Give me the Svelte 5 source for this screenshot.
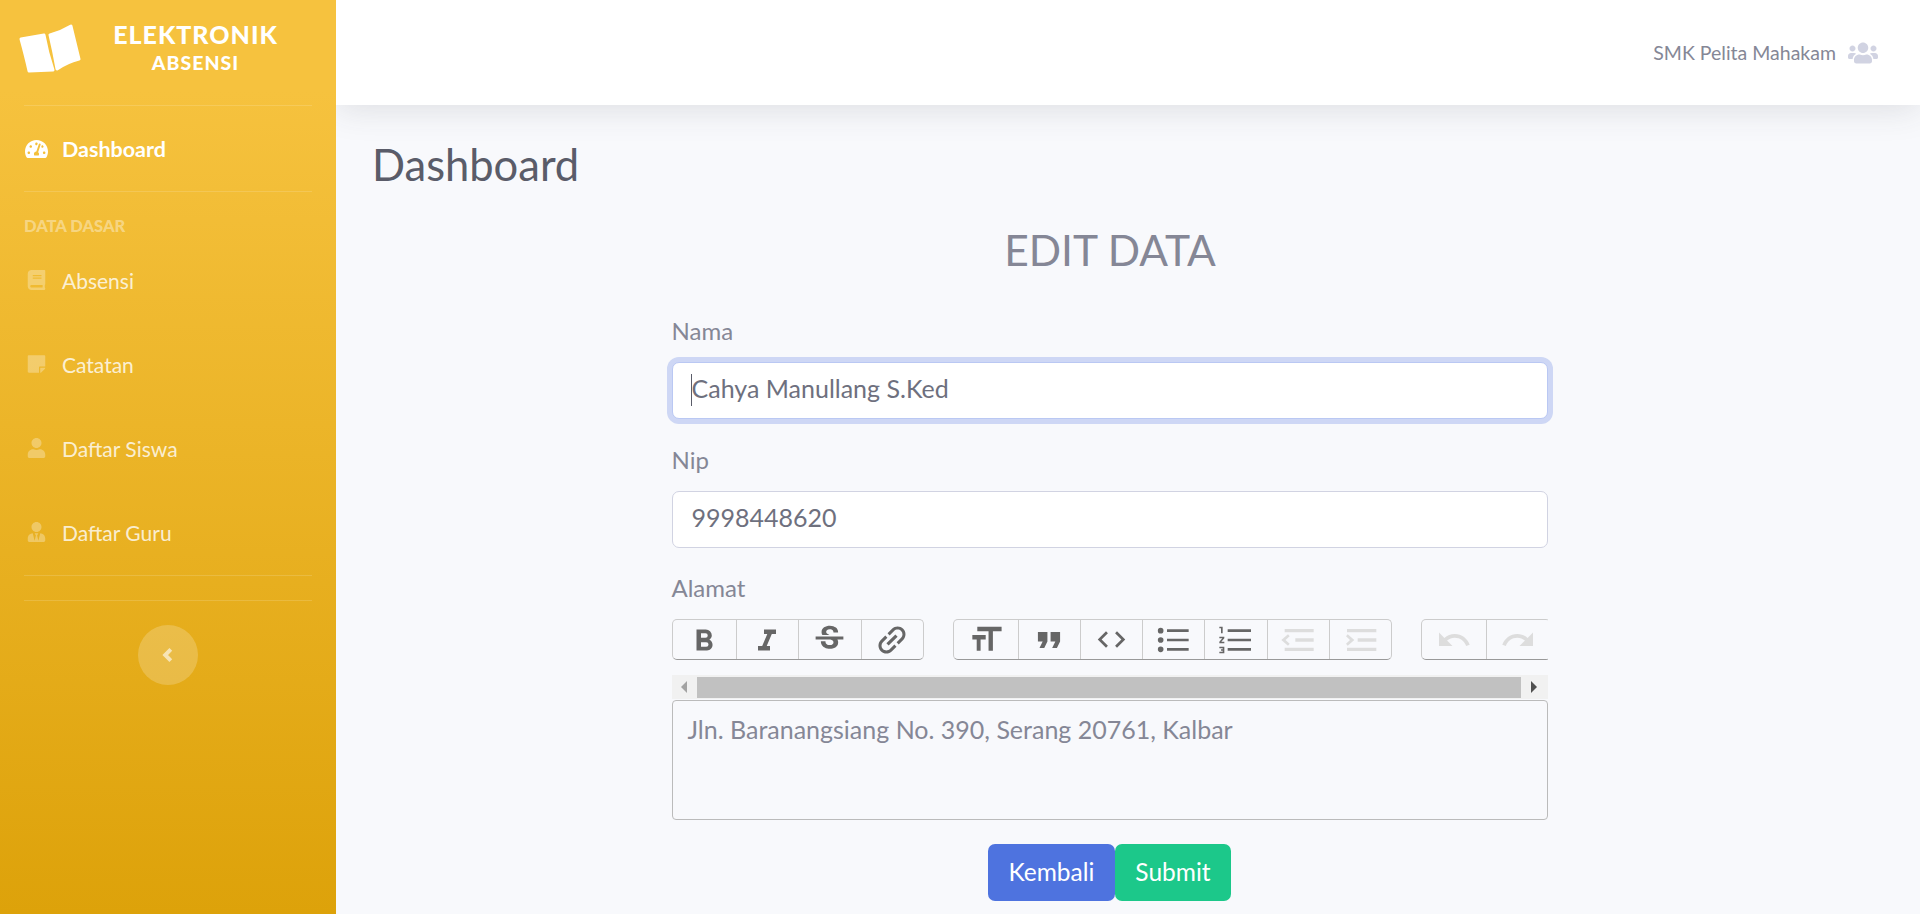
<script>
	const menu = [
		{ label: 'Absensi', icon: 'book', box: '0 0 448 512' },
		{ label: 'Catatan', icon: 'note', box: '0 0 448 512' },
		{ label: 'Daftar Siswa', icon: 'user', box: '0 0 448 512' },
		{ label: 'Daftar Guru', icon: 'tie', box: '0 0 448 512' }
	];
	const paths = {
		book: 'M448 360V24c0-13.3-10.7-24-24-24H96C43 0 0 43 0 96v320c0 53 43 96 96 96h328c13.3 0 24-10.7 24-24v-16c0-7.5-3.5-14.3-8.9-18.7-4.2-15.4-4.2-59.3 0-74.7 5.4-4.3 8.9-11.1 8.9-18.6zM128 134c0-3.3 2.7-6 6-6h212c3.3 0 6 2.7 6 6v20c0 3.3-2.7 6-6 6H134c-3.3 0-6-2.7-6-6v-20zm0 64c0-3.3 2.7-6 6-6h212c3.3 0 6 2.7 6 6v20c0 3.3-2.7 6-6 6H134c-3.3 0-6-2.7-6-6v-20zm253.4 250H96c-17.7 0-32-14.3-32-32 0-17.6 14.4-32 32-32h285.4c-1.9 17.1-1.9 46.9 0 64z',
		note: 'M312 320h136V56c0-13.3-10.7-24-24-24H24C10.7 32 0 42.7 0 56v400c0 13.3 10.7 24 24 24h264V344c0-13.2 10.8-24 24-24zm129 55l-98 98c-4.5 4.5-10.6 7-17 7h-6V352h128v6.1c0 6.3-2.5 12.4-7 16.9z',
		user: 'M224 256c70.7 0 128-57.3 128-128S294.7 0 224 0 96 57.3 96 128s57.3 128 128 128zm89.6 32h-16.7c-22.2 10.2-46.9 16-72.9 16s-50.6-5.8-72.9-16h-16.7C60.2 288 0 348.2 0 422.4V464c0 26.5 21.5 48 48 48h352c26.5 0 48-21.5 48-48v-41.6c0-74.2-60.2-134.4-134.4-134.4z',
		tie: 'M224 256c70.7 0 128-57.3 128-128S294.7 0 224 0 96 57.3 96 128s57.3 128 128 128zm95.8 32.6L272 480l-32-136 32-56h-96l32 56-32 136-47.8-191.4C56.9 292 0 350.3 0 422.4V464c0 26.5 21.5 48 48 48h352c26.5 0 48-21.5 48-48v-41.6c0-72.1-56.9-130.4-128.2-133.8z'
	};

	// widths are the toolbar cells as measured, off = greyed out
	const toolbar = [
		[
			{ w: 63, s: 36, d: 'M15.6 11.8c1-.7 1.6-1.8 1.6-2.8a4 4 0 0 0-4-4H7v14h7c2.1 0 3.7-1.7 3.7-3.8 0-1.5-.8-2.8-2.1-3.4zM10 7.5h3a1.5 1.5 0 1 1 0 3h-3v-3zm3.5 9H10v-3h3.5a1.5 1.5 0 1 1 0 3z' },
			{ w: 62, s: 36, d: 'M10 5v3h2.2l-3.4 8H6v3h8v-3h-2.2l3.4-8H18V5h-8z' },
			{ w: 63, s: 37, d: 'M6.85 7.08C6.85 4.37 9.45 3 12.24 3c1.64 0 3 .49 3.9 1.28.77.65 1.46 1.73 1.46 3.24h-3.01c0-.31-.05-.59-.15-.85-.29-.86-1.2-1.28-2.25-1.28-1.86 0-2.34.98-2.34 1.7 0 .48.25.88.74 1.21.38.25.77.48 1.41.7H7.39c-.21-.34-.54-.89-.54-1.92zM21 12v-2H3v2h9.62c1.15.45 1.96.75 1.96 1.97 0 1-.81 1.67-2.28 1.67-1.54 0-2.93-.54-2.93-2.51H6.4c0 .55.08 1.13.24 1.58.81 2.29 3.29 3.3 5.67 3.3 2.27 0 5.3-.89 5.3-4.05 0-.3-.01-1.16-.48-1.94H21V12z' },
			{ w: 62, s: 38, rot: -45, d: 'M3.9 12c0-1.71 1.39-3.1 3.1-3.1h4V7H7c-2.76 0-5 2.24-5 5s2.24 5 5 5h4v-1.9H7c-1.71 0-3.1-1.39-3.1-3.1zM8 13h8v-2H8v2zm9-6h-4v1.9h4c1.71 0 3.1 1.39 3.1 3.1s-1.39 3.1-3.1 3.1h-4V17h4c2.76 0 5-2.24 5-5s-2.24-5-5-5z' }
		],
		[
			{ w: 64, s: 36, d: 'M6.200 3.100h16.200v3h-5.800v13h-2.900v-13H6.200zM2.900 8.700h8.900v2.900H8.400v7.500H5.800v-7.500H2.900z' },
			{ w: 62, s: 38, d: 'M6 17h3l2-4V7H5v6h3zm8 0h3l2-4V7h-6v6h3z' },
			{ w: 62, s: 33, d: 'M9.400 16.600L4.800 12l4.600-4.600L8 6l-6 6 6 6 1.400-1.400zm5.200 0l4.600-4.600-4.600-4.600L16 6l6 6-6 6-1.400-1.400z' },
			{ w: 62, s: 40, d: 'M4.600 4.700a1.700 1.700 0 1 0 0 3.400 1.700 1.700 0 0 0 0-3.400zm0 5.600a1.700 1.700 0 1 0 0 3.400 1.700 1.700 0 0 0 0-3.400zm0 5.600a1.700 1.700 0 1 0 0 3.400 1.700 1.700 0 0 0 0-3.400zM8.400 5.600h13v1.600h-13zm0 5.600h13v1.600h-13zm0 5.600h13v1.600h-13z' },
			{ w: 63, s: 40, d: 'M2 17h2v.5H3v1h1v.5H2v1h3v-4H2v1zm1-9h1V4H2v1h1v3zm-1 3h1.800L2 13.100v.9h3v-1H3.200L5 10.900V10H2v1zm5-5.400h14v1.600H7zm0 11.200h14v1.600H7zm0-5.600h14v1.600H7z' },
			{ w: 62, s: 40, off: true, d: 'M4 5.400h17.400v2H4zM10.400 11h11v2h-11zM4 16.600h17.400v2H4zM6 8.500L2 12l4 3.500 1-1.200L4.500 12 7 9.700z' },
			{ w: 62, s: 40, off: true, d: 'M4.200 5.400h17.600v2H4.200zM10.600 11h11.200v2H10.600zM4.200 16.600h17.600v2H4.200zM3.600 9.700L6 12l-2.400 2.300 1 1.200L8.600 12 4.600 8.500z' }
		],
		[
			{ w: 64, s: 36, off: true, d: 'M12.500 8c-2.650 0-5.050.99-6.900 2.600L2 7v9h9l-3.620-3.620c1.390-1.160 3.160-1.880 5.120-1.880 3.540 0 6.550 2.310 7.600 5.500l2.370-.78C21.080 11.030 17.150 8 12.500 8z' },
			{ w: 64, s: 36, off: true, d: 'M18.400 10.600C16.550 8.990 14.150 8 11.500 8c-4.650 0-8.580 3.030-9.960 7.220L3.900 16c1.050-3.190 4.050-5.500 7.600-5.500 1.950 0 3.730.72 5.120 1.880L13 16h9V7l-3.600 3.600z' }
		]
	];
</script>

<div class="page">
	<aside class="sidebar">
		<div class="brand">
			<svg class="brand-icon" viewBox="0 0 62 50" aria-hidden="true">
				<path d="M2 15 L25 11 Q28 28 34 46 L10 47 Q7 33 2 15Z" />
				<path d="M31 11 Q42 8 52 2 L60 35 Q48 38 38 45 Q35 28 31 11Z" />
			</svg>
			<div class="brand-text">ELEKTRONIK<small>ABSENSI</small></div>
		</div>
		<hr />
		<a class="item active" href="#top">
			<svg class="fa dash" viewBox="0 0 576 512" aria-hidden="true"><path d="M288 32C128.940 32 0 160.940 0 320c0 52.800 14.250 102.260 39.060 144.800 5.610 9.620 16.300 15.200 27.440 15.200h443c11.140 0 21.830-5.580 27.440-15.200C561.750 422.260 576 372.800 576 320c0-159.060-128.940-288-288-288zm0 64c14.710 0 26.580 10.130 30.320 23.650-1.110 2.260-2.640 4.230-3.450 6.670l-9.220 27.670c-5.130 3.490-10.970 6.010-17.640 6.010-17.670 0-32-14.330-32-32S270.330 96 288 96zM96 384c-17.670 0-32-14.330-32-32s14.330-32 32-32 32 14.330 32 32-14.330 32-32 32zm48-160c-17.670 0-32-14.330-32-32s14.330-32 32-32 32 14.330 32 32-14.330 32-32 32zm246.770-72.410l-61.330 184C343.130 347.330 352 364.540 352 384c0 11.720-3.380 22.550-8.880 32H232.880c-5.500-9.450-8.880-20.280-8.880-32 0-33.940 26.500-61.430 59.900-63.590l61.340-184.010c4.170-12.560 17.730-19.450 30.360-15.170 12.570 4.190 19.350 17.790 15.170 30.360zm14.660 57.200l15.520-46.550c3.470-1.290 7.130-2.230 11.050-2.230 17.670 0 32 14.330 32 32s-14.330 32-32 32c-11.380-.01-20.890-6.280-26.570-15.220zM480 384c-17.670 0-32-14.330-32-32s14.330-32 32-32 32 14.330 32 32-14.330 32-32 32z" /></svg>
			<span>Dashboard</span>
		</a>
		<hr />
		<div class="heading">DATA DASAR</div>
		{#each menu as m}
			<a class="item" href="#top">
				<svg class="fa" viewBox={m.box} aria-hidden="true"><path d={paths[m.icon]} /></svg>
				<span>{m.label}</span>
			</a>
		{/each}
		<hr class="end" />
		<hr class="end2" />
		<button class="toggle" aria-label="Tutup menu">
			<svg viewBox="0 0 16 16" aria-hidden="true"><path d="M10.500 3 L5.500 8 L10.500 13" /></svg>
		</button>
	</aside>

	<div class="main">
		<header class="topbar">
			<span>SMK Pelita Mahakam</span>
			<svg class="users" viewBox="0 0 640 512" aria-hidden="true"><path d="M96 224c35.300 0 64-28.700 64-64s-28.700-64-64-64-64 28.700-64 64 28.700 64 64 64zm448 0c35.300 0 64-28.700 64-64s-28.700-64-64-64-64 28.700-64 64 28.700 64 64 64zm32 32h-64c-17.600 0-33.500 7.100-45.100 18.600 40.300 22.100 68.900 62 75.100 109.400h66c17.700 0 32-14.300 32-32v-32c0-35.300-28.700-64-64-64zm-256 0c61.900 0 112-50.100 112-112S381.900 32 320 32 208 82.100 208 144s50.100 112 112 112zm76.800 32h-8.300c-20.800 10-43.900 16-68.500 16s-47.600-6-68.500-16h-8.300C179.600 288 128 339.600 128 403.200V432c0 26.500 21.500 48 48 48h288c26.500 0 48-21.500 48-48v-28.800c0-63.600-51.600-115.200-115.200-115.200zm-223.700-13.400C161.500 263.100 145.600 256 128 256H64c-35.300 0-64 28.700-64 64v32c0 17.700 14.300 32 32 32h65.900c6.300-47.400 34.900-87.300 75.200-109.400z" /></svg>
		</header>

		<main class="content">
			<h1>Dashboard</h1>
			<h2>EDIT DATA</h2>
			<form class="form">
				<label for="nama">Nama</label>
				<div class="field first">
					<input id="nama" class="focused" value="Cahya Manullang S.Ked" readonly />
					<span class="caret"></span>
				</div>
				<label for="nip">Nip</label>
				<div class="field">
					<input id="nip" value="9998448620" readonly />
				</div>
				<label for="alamat">Alamat</label>
				<div class="toolbar">
					{#each toolbar as group}
						<div class="group">
							{#each group as b}
								<span class="tool" class:off={b.off} style="width:{b.w}px">
									<svg width={b.s} height={b.s} viewBox="0 0 24 24" aria-hidden="true">
										<path d={b.d} transform={b.rot ? `rotate(${b.rot} 12 12)` : undefined} />
									</svg>
								</span>
							{/each}
						</div>
					{/each}
				</div>
				<div class="hscroll">
					<span class="arrow left"></span>
					<span class="thumb"></span>
					<span class="arrow right"></span>
				</div>
				<textarea id="alamat" readonly>Jln. Baranangsiang No. 390, Serang 20761, Kalbar</textarea>
				<div class="actions">
					<button type="button" class="btn blue">Kembali</button>
					<button type="button" class="btn green">Submit</button>
				</div>
			</form>
		</main>
	</div>
</div>

<style>
	:global(body) {
		margin: 0;
		overflow: hidden;
		background: #f8f9fc;
		font-family: Lato, 'Noto Sans', sans-serif;
	}

	.page {
		display: flex;
		height: 914px;
		color: #858796;
	}

	.sidebar {
		position: relative;
		z-index: 1;
		width: 336px;
		flex: none;
		padding: 0 24px;
		box-sizing: border-box;
		background: linear-gradient(180deg, #f6c23e 10%, #dda20a 100%);
		color: #fff;
		display: flex;
		flex-direction: column;
	}

	.brand {
		height: 105px;
		display: flex;
		align-items: flex-start;
		flex: none;
		margin-left: -5px;
	}

	.brand-icon {
		width: 62px;
		height: 50px;
		margin-top: 24px;
		fill: #fff;
		stroke: #fff;
		stroke-width: 3;
		stroke-linejoin: round;
	}

	.brand-text {
		flex: 1;
		padding: 20px 2px 0 0;
		text-align: center;
		font-size: 25px;
		line-height: 29px;
		font-weight: 900;
		letter-spacing: 1px;
	}

	.brand-text small {
		display: block;
		font-size: 19.500px;
		line-height: 28px;
	}

	hr {
		width: 100%;
		flex: none;
		margin: 0;
		border: 0;
		border-top: 1px solid rgba(255, 255, 255, 0.15);
	}

	.item {
		display: flex;
		align-items: center;
		height: 84px;
		flex: none;
		color: rgba(255, 255, 255, 0.8);
		text-decoration: none;
		font-size: 21px;
		padding-left: 1px;
	}

	.item.active {
		height: 85px;
		color: #fff;
		font-weight: 700;
		font-size: 21.500px;
	}

	.fa {
		width: 23px;
		height: 20px;
		margin-right: 14px;
		fill: rgba(255, 255, 255, 0.3);
	}

	.fa.dash {
		fill: #fff;
		height: 22px;
	}

	.heading {
		height: 49px;
		flex: none;
		padding-top: 24px;
		box-sizing: border-box;
		font-size: 16.500px;
		line-height: 20px;
		font-weight: 900;
		color: rgba(255, 255, 255, 0.4);
		margin-bottom: -3px;
	}

	.end2 {
		margin-top: 24px;
	}

	.end {
		margin-top: 1px;
	}

	.toggle {
		width: 60px;
		height: 60px;
		flex: none;
		margin: 24px auto 0;
		padding: 0;
		border: 0;
		border-radius: 50%;
		background: rgba(255, 255, 255, 0.2);
		display: flex;
		align-items: center;
		justify-content: center;
	}

	.toggle svg {
		width: 18px;
		height: 18px;
		fill: none;
		stroke: rgba(255, 255, 255, 0.6);
		stroke-width: 3.500;
	}

	.main {
		flex: 1;
		min-width: 0;
	}

	.topbar {
		height: 105px;
		box-sizing: border-box;
		background: #fff;
		box-shadow: 0 3px 35px rgba(58, 59, 69, 0.15);
		display: flex;
		align-items: center;
		justify-content: flex-end;
		padding: 0 42px 0 0;
		font-size: 19.500px;
	}

	.users {
		width: 30px;
		height: 24px;
		margin-left: 12px;
		fill: #d1d3e2;
	}

	.content {
		padding: 35px 73px 0 36px;
	}

	h1 {
		margin: 0;
		font-size: 43.500px;
		line-height: 48px;
		font-weight: 400;
		color: #5a5c69;
	}

	h2 {
		margin: 38px 0 0 1px;
		text-align: center;
		font-size: 42.500px;
		line-height: 48px;
		font-weight: 400;
		color: #858796;
	}

	.form {
		width: 876px;
		margin: 44px auto 0;
	}

	label {
		display: block;
		font-size: 24px;
		line-height: 26px;
		margin-bottom: 18px;
	}

	.field {
		position: relative;
		margin-bottom: 27px;
	}

	.field.first {
		margin-bottom: 28px;
	}

	input {
		display: block;
		width: 100%;
		height: 57px;
		box-sizing: border-box;
		padding: 0 19px 5px;
		border: 1px solid #d1d3e2;
		border-radius: 7px;
		background: #fff;
		font: inherit;
		font-size: 25px;
		color: #6e707e;
		outline: none;
	}

	input.focused {
		border-color: #bac8f3;
		box-shadow: 0 0 0 5px rgba(78, 115, 223, 0.25);
	}

	.caret {
		position: absolute;
		left: 19px;
		top: 12px;
		width: 1px;
		height: 32px;
		background: #5a5c69;
	}

	.toolbar {
		display: flex;
		gap: 29px;
		overflow: hidden;
		margin-top: 1px;
	}

	.group {
		display: flex;
		flex: none;
		height: 41px;
		box-sizing: border-box;
		border: 1px solid #ccc;
		border-bottom-color: #999;
		border-radius: 5px;
	}

	.tool {
		display: flex;
		align-items: center;
		justify-content: center;
		box-sizing: border-box;
		border-left: 1px solid #ccc;
		fill: #666;
	}

	.tool:first-child {
		border-left: 0;
	}

	.tool.off {
		fill: #ddd;
	}

	.hscroll {
		display: flex;
		align-items: center;
		height: 24px;
		margin-top: 15px;
		background: #f1f1f1;
	}

	.thumb {
		flex: 1;
		height: 21px;
		background: #c1c1c1;
	}

	.arrow {
		width: 25px;
		flex: none;
		display: flex;
		justify-content: center;
	}

	.arrow.right {
		width: 27px;
	}

	.arrow::before {
		content: '';
		border: 6px solid transparent;
	}

	.arrow.left::before {
		border-right-color: #a3a3a3;
		border-left-width: 0;
	}

	.arrow.right::before {
		border-left-color: #505050;
		border-right-width: 0;
	}

	textarea {
		display: block;
		width: 100%;
		height: 120px;
		box-sizing: border-box;
		margin: 1px 0 0;
		padding: 14px 15px;
		border: 1px solid #bbb;
		border-radius: 4px;
		background: transparent;
		font: inherit;
		font-size: 25px;
		line-height: 28px;
		color: #858796;
		resize: none;
		outline: none;
	}

	.actions {
		display: flex;
		justify-content: center;
		margin-top: 24px;
	}

	.btn {
		height: 57px;
		padding: 0 20.500px 2px;
		border: 0;
		border-radius: 7px;
		font: inherit;
		font-size: 24.500px;
		color: #fff;
	}

	.blue {
		background: #4e73df;
	}

	.green {
		background: #1cc88a;
	}
</style>
